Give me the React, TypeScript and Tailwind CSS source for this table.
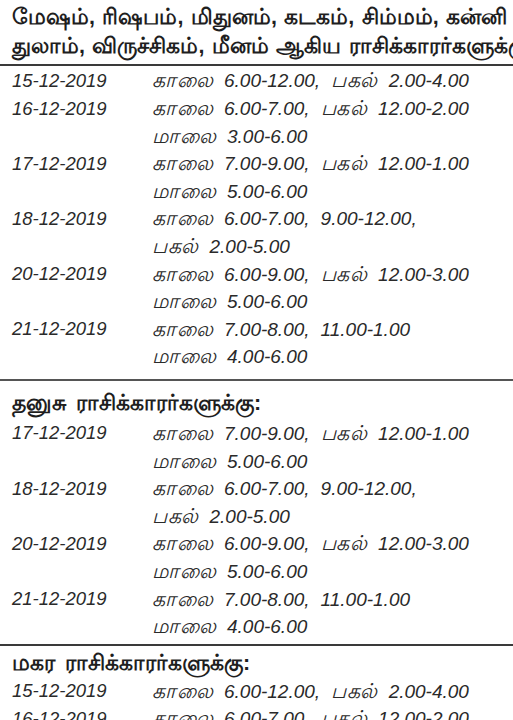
import React from 'react'

type Row = { date?: string; time: string }

const first: Row[] = [
  { date: '15-12-2019', time: 'காலை 6.00-12.00, பகல் 2.00-4.00' },
  { date: '16-12-2019', time: 'காலை 6.00-7.00, பகல் 12.00-2.00' },
  { time: 'மாலை 3.00-6.00' },
  { date: '17-12-2019', time: 'காலை 7.00-9.00, பகல் 12.00-1.00' },
  { time: 'மாலை 5.00-6.00' },
  { date: '18-12-2019', time: 'காலை 6.00-7.00, 9.00-12.00,' },
  { time: 'பகல் 2.00-5.00' },
  { date: '20-12-2019', time: 'காலை 6.00-9.00, பகல் 12.00-3.00' },
  { time: 'மாலை 5.00-6.00' },
  { date: '21-12-2019', time: 'காலை 7.00-8.00, 11.00-1.00' },
  { time: 'மாலை 4.00-6.00' },
]

const second: Row[] = [
  { date: '17-12-2019', time: 'காலை 7.00-9.00, பகல் 12.00-1.00' },
  { time: 'மாலை 5.00-6.00' },
  { date: '18-12-2019', time: 'காலை 6.00-7.00, 9.00-12.00,' },
  { time: 'பகல் 2.00-5.00' },
  { date: '20-12-2019', time: 'காலை 6.00-9.00, பகல் 12.00-3.00' },
  { time: 'மாலை 5.00-6.00' },
  { date: '21-12-2019', time: 'காலை 7.00-8.00, 11.00-1.00' },
  { time: 'மாலை 4.00-6.00' },
]

const third: Row[] = [
  { date: '15-12-2019', time: 'காலை 6.00-12.00, பகல் 2.00-4.00' },
  { date: '16-12-2019', time: 'காலை 6.00-7.00, பகல் 12.00-2.00' },
]

// Tamil words are set a little larger than the figures, like the print
const Time = ({ text }: { text: string }) => (
  <div className="flex items-baseline gap-[11px]">
    {text.split(' ').map((w, i) =>
      /[\u0B80-\u0BFF]/.test(w) ? (
        <span key={i} className="text-[20.5px] tracking-[0.5px]">{w}</span>
      ) : (
        <span key={i} className="text-[19px]">{w}</span>
      )
    )}
  </div>
)

const Rows = ({ rows }: { rows: Row[] }) => (
  <div className="flex flex-col">
    {rows.map((r, i) => (
      <div key={i} className="flex h-[27.6px] items-center italic text-[18.5px] text-[#2a2a2a] whitespace-nowrap">
        <div className="w-[152px] shrink-0 pl-[12px]">{r.date ?? ''}</div>
        <Time text={r.time} />
      </div>
    ))}
  </div>
)

const App = () => {
  return (
    <div className="w-[513px] h-[720px] overflow-hidden bg-white font-['Liberation_Sans','Noto_Sans',sans-serif]">
      {/* top heading */}
      <div className="pt-[3px] pl-[12px] font-bold text-[21.5px] leading-[29px] text-[#1e1e1e] whitespace-nowrap [word-spacing:1.5px]">
        <div>மேஷம், ரிஷபம், மிதுனம், கடகம், சிம்மம், கன்னி</div>
        <div>துலாம், விருச்சிகம், மீனம் ஆகிய ராசிக்காரர்களுக்கு</div>
      </div>
      <div className="mt-[3px] h-[2px] bg-[#3a3a3a]" />
      <div className="pt-[1px]">
        <Rows rows={first} />
      </div>
      <div className="mt-[8px] h-[2px] bg-[#555]" />

      <div className="pt-[8px] pl-[12px] font-bold text-[21.5px] leading-[28px] text-[#1e1e1e] [word-spacing:4px]">
        தனுசு ராசிக்காரர்களுக்கு:
      </div>
      <div className="pt-[3px]">
        <Rows rows={second} />
      </div>
      <div className="mt-[4px] h-[2px] bg-[#3a3a3a]" />

      <div className="pt-[3px] pl-[12px] font-bold text-[21.5px] leading-[28px] text-[#1e1e1e] [word-spacing:4px]">
        மகர ராசிக்காரர்களுக்கு:
      </div>
      <Rows rows={third} />
    </div>
  )
}

export default App
